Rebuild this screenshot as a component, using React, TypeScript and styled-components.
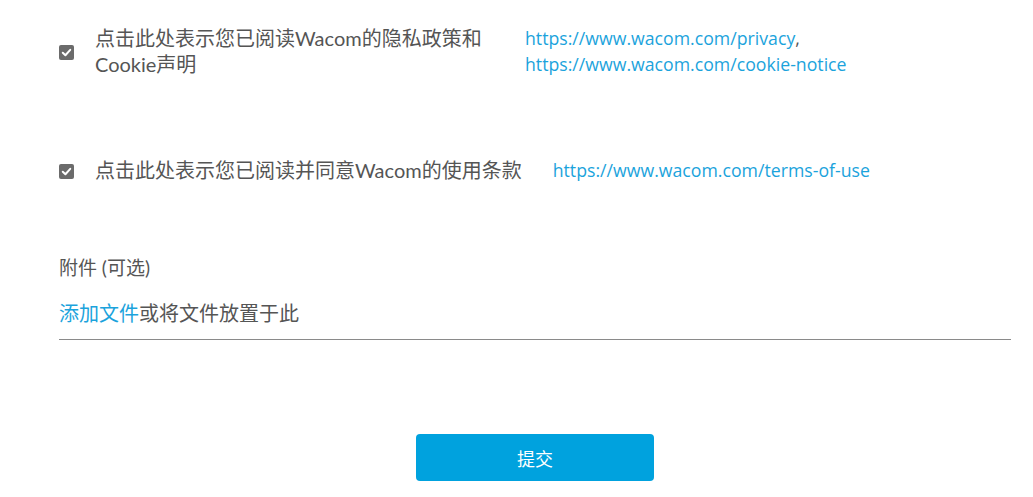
import React from 'react';
import styled, { createGlobalStyle } from 'styled-components';

const GlobalStyle = createGlobalStyle`
  html, body {
    margin: 0;
    padding: 0;
    background: #ffffff;
  }
  body {
    font-family: Lato, "Noto Sans CJK SC", sans-serif;
    color: #555555;
  }
`;

const Form = styled.form`
  display: flex;
  flex-direction: column;
  padding: 25px 22px 0 59px;
  width: 1033px;
  box-sizing: border-box;
`;

const ConsentRow = styled.div<{ top?: number }>`
  display: flex;
  align-items: center;
  margin-top: ${({ top }) => top || 0}px;
`;

const Box = styled.span`
  display: inline-flex;
  align-items: center;
  justify-content: center;
  width: 15px;
  height: 15px;
  border-radius: 2px;
  background-color: #6b6b6b;
  flex-shrink: 0;
  margin-top: 2px;
`;

const Label = styled.span<{ width?: number }>`
  margin-left: 21px;
  font-size: 20px;
  line-height: 26px;
  color: #555555;
  width: ${({ width }) => (width ? `${width}px` : 'auto')};
  white-space: ${({ width }) => (width ? 'normal' : 'nowrap')};
  flex-shrink: 0;
`;

const Links = styled.div<{ offset: number }>`
  display: flex;
  flex-direction: column;
  margin-left: ${({ offset }) => offset}px;
  font-family: "Open Sans", "Noto Sans CJK SC", sans-serif;
  font-size: 17.7px;
  line-height: 26px;
  color: #555555;
`;

const Link = styled.a`
  color: #1ba3dc;
  text-decoration: none;
`;

const FieldLabel = styled.div`
  margin-top: 73px;
  font-size: 19px;
  line-height: 24px;
  color: #555555;
`;

const DropZone = styled.div`
  margin-top: 20px;
  padding-bottom: 13px;
  border-bottom: 1px solid #8a8a8a;
  font-size: 20px;
  line-height: 26px;
  color: #555555;
`;

const ButtonRow = styled.div`
  display: flex;
  justify-content: center;
  margin-top: 94px;
`;

const SubmitButton = styled.button`
  width: 238px;
  height: 47px;
  border: none;
  border-radius: 4px;
  background-color: #00a2de;
  color: #ffffff;
  font-family: "Noto Sans CJK SC", sans-serif;
  font-size: 18px;
  cursor: pointer;
`;

function CheckMark() {
  return (
    <Box>
      <svg width="11" height="11" viewBox="0 0 10 10">
        <path
          d="M1.6 5.2 L4 7.5 L8.4 2.6"
          fill="none"
          stroke="#ffffff"
          strokeWidth="1.8"
          strokeLinecap="round"
          strokeLinejoin="round"
        />
      </svg>
    </Box>
  );
}

export default function App() {
  return (
    <>
      <GlobalStyle />
      <Form onSubmit={(e) => e.preventDefault()}>
        <ConsentRow>
          <CheckMark />
          <Label width={410}>点击此处表示您已阅读Wacom的隐私政策和 Cookie声明</Label>
          <Links offset={20}>
            <span>
              <Link href="#">https://www.wacom.com/privacy</Link>,
            </span>
            <Link href="#">https://www.wacom.com/cookie-notice</Link>
          </Links>
        </ConsentRow>
        <ConsentRow top={80}>
          <CheckMark />
          <Label>点击此处表示您已阅读并同意Wacom的使用条款</Label>
          <Links offset={31}>
            <Link href="#">https://www.wacom.com/terms-of-use</Link>
          </Links>
        </ConsentRow>
        <FieldLabel>附件 (可选)</FieldLabel>
        <DropZone>
          <Link href="#">添加文件</Link>或将文件放置于此
        </DropZone>
        <ButtonRow>
          <SubmitButton type="submit">提交</SubmitButton>
        </ButtonRow>
      </Form>
    </>
  );
}
